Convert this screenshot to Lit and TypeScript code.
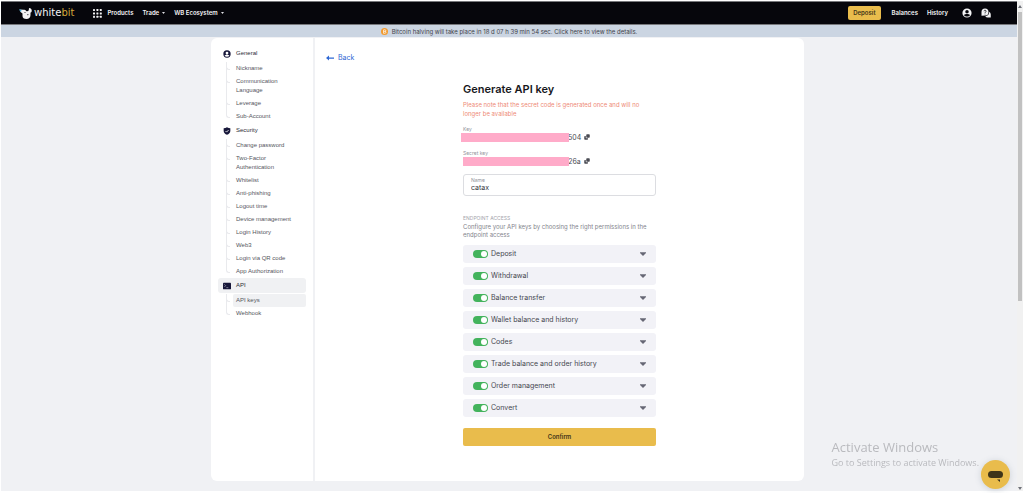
import { LitElement, html, css, svg } from "lit";
import { customElement, property, state } from "lit/decorators.js";
import { classMap } from "lit/directives/class-map.js";

interface Section {
  title: string;
  icon: "user" | "shield" | "terminal";
  items: string[];
}

const SECTIONS: Section[] = [
  {
    title: "General",
    icon: "user",
    items: ["Nickname", "Communication Language", "Leverage", "Sub-Account"],
  },
  {
    title: "Security",
    icon: "shield",
    items: [
      "Change password",
      "Two-Factor Authentication",
      "Whitelist",
      "Anti-phishing",
      "Logout time",
      "Device management",
      "Login History",
      "Web3",
      "Login via QR code",
      "App Authorization",
    ],
  },
  { title: "API", icon: "terminal", items: ["API keys", "Webhook"] },
];

const ENDPOINTS = [
  "Deposit",
  "Withdrawal",
  "Balance transfer",
  "Wallet balance and history",
  "Codes",
  "Trade balance and order history",
  "Order management",
  "Convert",
];

const userPath = svg`<path fill-rule="evenodd" d="M12 1a11 11 0 1 0 0 22 11 11 0 0 0 0-22zm0 4a4.2 4.2 0 1 1 0 8.400 4.200 4.200 0 0 1 0-8.400zm0 15.500c-3 0-5.600-1.200-7.200-3.300 1.200-1.900 4.500-2.700 7.200-2.700s6 .8 7.200 2.700c-1.600 2.100-4.200 3.300-7.200 3.300z"/>`;

const icons = {
  user: html`<svg class="icon" viewBox="0 0 24 24" aria-hidden="true">${userPath}</svg>`,
  shield: html`<svg class="icon" viewBox="0 0 24 24" aria-hidden="true">
    <path d="M12 1c3 2 6.500 2.500 10 2.500V12c0 5.500-4.500 9.500-10 11.500C6.500 21.500 2 17.500 2 12V3.500C5.500 3.500 9 3 12 1z" />
    <path d="M7.500 12l3.300 3.300L16.800 9" fill="none" stroke="#fff" stroke-width="2.400" />
  </svg>`,
  terminal: html`<svg class="icon" viewBox="0 0 24 24" aria-hidden="true">
    <rect x="0" y="2" width="24" height="20" rx="2" />
    <path d="M4 7l4 4-4 4M10 17h6" fill="none" stroke="#b9bac8" stroke-width="1.800" />
  </svg>`,
};

const copyIcon = html`<svg class="copy-icon" viewBox="0 0 12 12" aria-hidden="true">
  <rect x="4.500" y="0.500" width="7" height="7" rx="1.500" />
  <path d="M3.500 4H2A1.500 1.500 0 0 0 .5 5.500V10A1.500 1.500 0 0 0 2 11.500h4.500A1.500 1.500 0 0 0 8 10V8.500H5A1.500 1.500 0 0 1 3.500 7z" />
</svg>`;

@customElement("top-bar")
class TopBar extends LitElement {
  static styles = css`
    :host {
      display: block;
    }
    .bar {
      display: flex;
      align-items: center;
      height: 22px;
      padding: 0 26px 0 18px;
      background: #06060c;
      border-top: 1px solid #77787c;
      border-bottom: 1px solid #77787c;
      color: #f4f4f6;
      font-weight: 600;
      font-size: 6px;
      line-height: 10px;
    }
    a {
      color: inherit;
      text-decoration: none;
    }
    .logo {
      display: flex;
      align-items: center;
      gap: 2px;
      margin-right: 19px;
      font-family: "DejaVu Sans", sans-serif;
      font-size: 10px;
      font-weight: 400;
    }
    .logo svg {
      width: 13px;
      height: 11px;
    }
    .gold {
      color: #d5a93a;
    }
    .menu {
      display: flex;
      align-items: center;
      gap: 9px;
    }
    .entry {
      display: flex;
      align-items: center;
      gap: 3px;
    }
    .dots {
      width: 9px;
      height: 9px;
      margin-right: 2px;
    }
    .caret {
      width: 3px;
      height: 2px;
    }
    .right {
      display: flex;
      align-items: center;
      gap: 9px;
      margin-left: auto;
    }
    .deposit {
      display: block;
      padding: 2px 5px;
      margin-right: 2px;
      border-radius: 2px;
      background: #e9bc4c;
      color: #3f3519;
    }
    .round {
      width: 10px;
      height: 10px;
      margin-left: 5px;
    }
    .help {
      width: 10px;
      height: 10px;
    }
    button {
      all: unset;
      display: flex;
    }
  `;

  render() {
    const caret = html`<svg class="caret" viewBox="0 0 6 4" aria-hidden="true"><path d="M0 0h6L3 4z" fill="#dddde2" /></svg>`;
    return html`
      <header class="bar">
        <a class="logo" href="#">
          <svg viewBox="0 0 26 22" aria-hidden="true">
            <path fill="#f4f4f6" d="M1 3l9 .5C11.500 3 13 4 14.500 6c1.500.8 4 .5 5-1.500L20 0c4 0 6 3 5.500 6-.4 2-1.500 3-2.500 3v5c0 5-3.500 8-8 8-5 0-8-2.500-8-6V11L3 8z" />
            <circle cx="12" cy="9" r="1" fill="#06060c" />
            <path d="M0 3l5 .3L4 8z" fill="#39a8d8" />
            <path d="M16 13l3-1-1 3z" fill="#06060c" />
          </svg>
          <span>white<span class="gold">bit</span></span>
        </a>
        <nav class="menu">
          <a class="entry" href="#">
            <svg class="dots" viewBox="0 0 9 9" aria-hidden="true" fill="#f4f4f6">
              ${[0, 1, 2].map((r) => [0, 1, 2].map((c) => svg`<rect x=${c * 3.4} y=${r * 3.4} width="2" height="2" rx=".4" />`))}
            </svg>
            Products
          </a>
          <a class="entry" href="#">Trade ${caret}</a>
          <a class="entry" href="#">WB Ecosystem ${caret}</a>
        </nav>
        <nav class="right">
          <a class="deposit" href="#">Deposit</a>
          <a href="#">Balances</a>
          <a href="#">History</a>
          <button aria-label="Account">
            <svg class="round" viewBox="0 0 24 24" fill="#f4f4f6">${userPath}</svg>
          </button>
          <button aria-label="Help">
            <svg class="help" viewBox="0 0 20 20" fill="#f4f4f6">
              <path d="M8 1a7 7 0 0 1 0 14l-7 .5V8a7 7 0 0 1 7-7z" />
              <path d="M16.500 7.500A6 6 0 0 1 19.500 13v6H13.500a6 6 0 0 1-5-2.600c5 0 8-3.900 8-8.900z" />
              <path d="M6 6.500c0-3 4.500-2.600 4.200 0C10 8 8 8 8 9.800M8 11.300v1.400" fill="none" stroke="#06060c" stroke-width="1.500" />
            </svg>
          </button>
        </nav>
      </header>
    `;
  }
}

@customElement("side-nav")
class SideNav extends LitElement {
  static styles = css`
    :host {
      display: block;
    }
    .nav {
      display: flex;
      flex-direction: column;
      padding: 8px 7px 0;
      color: #55565e;
      font-family: "Liberation Sans", sans-serif;
      font-size: 6px;
      line-height: 9px;
    }
    a {
      color: inherit;
      text-decoration: none;
    }
    .head {
      display: flex;
      align-items: center;
      gap: 5px;
      padding: 3px 5px;
      border-radius: 3px;
      font-family: "Liberation Sans", sans-serif;
      -webkit-text-stroke: 0;
      color: #2b2c36;
    }
    .head.active,
    .item.active {
      background: #f0f1f3;
    }
    .icon {
      width: 8px;
      height: 8px;
      fill: #17173a;
    }
    .list {
      list-style: none;
      margin: 0 0 0 8px;
      padding: 1px 0 0;
    }
    .leaf {
      position: relative;
      padding-left: 7px;
    }
    .leaf::before {
      content: "";
      position: absolute;
      left: 0;
      top: 0;
      bottom: 0;
      border-left: 1px solid #e9eaed;
    }
    .leaf:last-child::before {
      bottom: 8px;
    }
    .leaf::after {
      content: "";
      position: absolute;
      left: 0;
      top: 3px;
      width: 3px;
      height: 4px;
      border-left: 1px solid #e9eaed;
      border-bottom: 1px solid #e9eaed;
      border-bottom-left-radius: 3px;
    }
    .item {
      display: block;
      padding: 2px 14px 2px 3px;
      border-radius: 2px;
    }
  `;

  @property({ type: String }) current = "API keys";

  render() {
    return html`<nav class="nav" aria-label="Settings">
      ${SECTIONS.map(
        (s) => html`
          <a href="#" class=${classMap({ head: true, active: s.items.includes(this.current) })}>${icons[s.icon]}${s.title}</a>
          <ul class="list">
            ${s.items.map(
              (i) => html`<li class="leaf">
                <a href="#" class=${classMap({ item: true, active: i === this.current })}>${i}</a>
              </li>`
            )}
          </ul>
        `
      )}
    </nav>`;
  }
}

@customElement("key-form")
class KeyForm extends LitElement {
  static styles = css`
    :host {
      display: block;
      font-size: 7px;
    }
    .form {
      display: flex;
      flex-direction: column;
      max-width: 193px;
      margin: 0 auto;
    }
    h1 {
      margin: 0;
      font-size: 11px;
      line-height: 14px;
      font-weight: 600;
      color: #17171c;
    }
    .note,
    .hint {
      font-size: 6px;
    }
    .note {
      margin: 4px 0 8px;
      line-height: 9px;
      color: #ee8a76;
    }
    .label {
      font-size: 5px;
      line-height: 6px;
      color: #92939b;
    }
    .secret {
      display: flex;
      align-items: center;
      height: 10px;
      margin-bottom: 8px;
      color: #4a4b53;
    }
    .mask {
      position: relative;
      width: 55%;
      height: 9px;
      background: #ffabc9;
    }
    .mask.wide {
      margin-left: -2px;
      width: 56%;
    }
    .tail {
      margin-left: -1px;
    }
    .copy {
      all: unset;
      display: flex;
      margin-left: 3px;
    }
    .copy-icon {
      width: 6px;
      height: 6px;
      fill: #4a4b53;
    }
    .field {
      display: flex;
      flex-direction: column;
      padding: 2px 7px;
      border: 1px solid #dcdde1;
      border-radius: 3px;
    }
    .field input {
      all: unset;
      font-size: 7px;
      line-height: 10px;
      height: 10px;
      color: #33343b;
    }
    .caption {
      margin: 19px 0 2px;
      font-size: 5px;
      line-height: 6px;
      color: #a3a4ab;
    }
    .hint {
      margin: 0 0 6px;
      line-height: 8px;
      color: #83848c;
    }
    .rows {
      display: flex;
      flex-direction: column;
      gap: 4px;
    }
    .row {
      display: flex;
      align-items: center;
      padding: 4px 10px;
      border-radius: 3px;
      background: #f2f2f7;
      line-height: 10px;
      color: #45464f;
    }
    .row label {
      display: flex;
      align-items: center;
      gap: 3px;
      flex: 1;
    }
    .toggle {
      appearance: none;
      display: flex;
      justify-content: flex-start;
      align-items: center;
      width: 15px;
      height: 8px;
      margin: 0;
      padding: 0 1px;
      box-sizing: border-box;
      border-radius: 4px;
      background: #b9bac2;
    }
    .toggle::before {
      content: "";
      width: 6px;
      height: 6px;
      border-radius: 50%;
      background: #fff;
    }
    .toggle:checked {
      justify-content: flex-end;
      background: #43b35c;
    }
    .expand {
      all: unset;
      display: flex;
    }
    .expand svg {
      width: 6px;
      height: 4px;
      fill: #666775;
    }
    .confirm {
      margin-top: 11px;
      padding: 4px;
      border: 0;
      border-radius: 2px;
      background: #e9bc4c;
      color: #3f3519;
      font: 600 6px/10px Inter, sans-serif;
    }
  `;

  @state() private enabled = new Set(ENDPOINTS);

  private toggle(name: string) {
    const next = new Set(this.enabled);
    next.has(name) ? next.delete(name) : next.add(name);
    this.enabled = next;
  }

  render() {
    return html`<form class="form" @submit=${(e: Event) => e.preventDefault()}>
      <h1>Generate API key</h1>
      <p class="note">Please note that the secret code is generated once and will no longer be available</p>
      <span class="label">Key</span>
      <div class="secret">
        <span class="mask wide"></span><span class="tail">504</span>
        <button type="button" class="copy" aria-label="Copy key">${copyIcon}</button>
      </div>
      <span class="label">Secret key</span>
      <div class="secret">
        <span class="mask"></span><span class="tail">26a</span>
        <button type="button" class="copy" aria-label="Copy secret key">${copyIcon}</button>
      </div>
      <div class="field">
        <label class="label" for="name">Name</label>
        <input id="name" type="text" value="catax" />
      </div>
      <p class="caption">ENDPOINT ACCESS</p>
      <p class="hint">Configure your API keys by choosing the right permissions in the endpoint access</p>
      <div class="rows">
        ${ENDPOINTS.map(
          (name) => html`<div class="row">
            <label>
              <input class="toggle" type="checkbox" .checked=${this.enabled.has(name)} @change=${() => this.toggle(name)} />
              ${name}
            </label>
            <button type="button" class="expand" aria-label="Expand ${name}">
              <svg viewBox="0 0 12 8"><path d="M0 0.500h12v1.500L6 8 0 2z" /></svg>
            </button>
          </div>`
        )}
      </div>
      <button class="confirm" type="submit">Confirm</button>
    </form>`;
  }
}

@customElement("app-root")
class AppRoot extends LitElement {
  static styles = css`
    :host {
      display: block;
      font-family: Inter, "Liberation Sans", sans-serif;
      background: #fff;
    }
    .shell {
      display: flex;
      min-height: 100vh;
      box-sizing: border-box;
      padding: 1px 1px 2px 1px;
    }
    .page {
      flex: 1;
      background: #f0f1f4;
    }
    .banner {
      display: flex;
      justify-content: center;
      align-items: center;
      gap: 4px;
      height: 12px;
      background: #cbd5e2;
      color: #3f434b;
      font-size: 6px;
      text-decoration: none;
    }
    .coin {
      width: 7px;
      height: 7px;
    }
    .content {
      padding: 1px 3px 10px 0;
    }
    .card {
      display: grid;
      grid-template-columns: 104px 1fr;
      max-width: 593px;
      margin: 0 auto;
      border-radius: 6px;
      background: #fff;
    }
    .side {
      border-right: 2px solid #f0f1f4;
    }
    .main {
      padding: 15px 11px 35px;
    }
    .back {
      display: flex;
      align-items: center;
      gap: 4px;
      margin-bottom: 19px;
      color: #2f68d4;
      font-size: 7px;
      line-height: 10px;
      text-decoration: none;
    }
    .back svg {
      width: 8px;
      height: 6px;
    }
    .scroll {
      display: flex;
      flex-direction: column;
      align-items: center;
      width: 6px;
      background: #f1f1f1;
    }
    .arrow {
      width: 4px;
      height: 3px;
      margin: 4px 0;
      fill: #70737a;
    }
    .thumb {
      width: 4px;
      height: 59%;
      background: #c1c1c1;
    }
    .down {
      margin-top: auto;
      margin-bottom: 1px;
    }
    .watermark {
      position: fixed;
      right: 45px;
      bottom: 23px;
      font-family: "Open Sans", "Noto Sans", sans-serif;
      color: #b9babe;
      font-size: 9px;
      line-height: 14px;
    }
    .watermark strong {
      display: block;
      font-weight: 400;
      font-size: 13px;
      line-height: 18px;
    }
    .chat {
      position: fixed;
      right: 14px;
      bottom: 4px;
      width: 29px;
      height: 29px;
      padding: 0;
      border: 0;
      border-radius: 50%;
      background: #e9bc4c;
      box-shadow: 0 1px 6px rgba(90, 110, 130, 0.25);
    }
    .chat svg {
      display: block;
      width: 15px;
      height: 12px;
      margin: 2px auto 0;
      fill: #3f3519;
    }
  `;

  render() {
    return html`
      <div class="shell">
        <div class="page">
          <top-bar></top-bar>
          <a class="banner" href="#">
            <svg class="coin" viewBox="0 0 14 14" aria-hidden="true">
              <circle cx="7" cy="7" r="7" fill="#f29a2e" />
              <path d="M5.500 3.500h2.500a1.600 1.600 0 0 1 0 3.300H5.500M8 6.800a1.800 1.800 0 0 1 0 3.700H5V3.500" fill="none" stroke="#fff" stroke-width="1.400" />
            </svg>
            Bitcoin halving will take place in 18 d 07 h 39 min 54 sec. Click here to view the details.
          </a>
          <div class="content">
            <div class="card">
              <aside class="side"><side-nav></side-nav></aside>
              <main class="main">
                <a class="back" href="#">
                  <svg viewBox="0 0 16 12" aria-hidden="true">
                    <path d="M16 5v2.400H6V11L0 6.200 6 1v4z" fill="#2f68d4" />
                  </svg>
                  Back
                </a>
                <key-form></key-form>
              </main>
            </div>
          </div>
        </div>
        <div class="scroll" aria-hidden="true">
          <svg class="arrow" viewBox="0 0 8 6"><path d="M0 6l4-6 4 6z" /></svg>
          <div class="thumb"></div>
          <svg class="arrow down" viewBox="0 0 8 6"><path d="M0 0l4 6 4-6z" /></svg>
        </div>
      </div>
      <div class="watermark"><strong>Activate Windows</strong>Go to Settings to activate Windows.</div>
      <button class="chat" aria-label="Open chat">
        <svg viewBox="0 0 30 24"><rect x="0" y="2" width="30" height="14" rx="7" /><path d="M18 19h6v5z" /></svg>
      </button>
    `;
  }
}
